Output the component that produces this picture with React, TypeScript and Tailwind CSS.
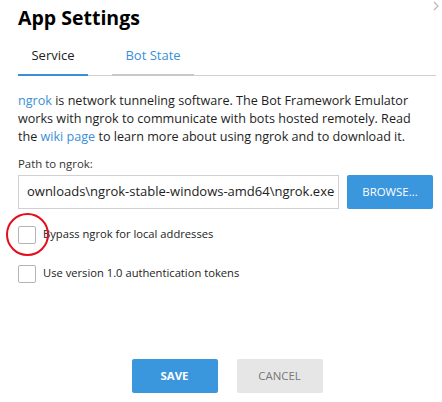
import { FC, useState } from "react";

const font = { fontFamily: '"Open Sans", "Noto Sans", sans-serif' };

const Checkbox: FC<{ label: string; checked: boolean; onChange: () => void }> = ({ label, checked, onChange }) => (
    <label className="flex items-center gap-[7px] cursor-pointer">
        <span
            onClick={onChange}
            className={`w-[18px] h-[18px] border border-[#b4b4b4] rounded-[2px] ${checked ? "bg-[#3a96dd]" : "bg-white"}`}
        />
        <span className="text-[11.2px] text-[#222]">{label}</span>
    </label>
);

export default function App() {
    const [bypass, setBypass] = useState(false);
    const [v1, setV1] = useState(false);

    return (
        <div className="relative w-[442px] h-[402px] bg-white overflow-hidden pl-[18px] pr-[6px]" style={font}>
            <svg className="absolute right-[3px] top-[1px]" width="6" height="10" viewBox="0 0 6 10">
                <path d="M1 1 L5 5 L1 9" stroke="#b8b8b8" strokeWidth="1.2" fill="none" />
            </svg>

            <h1 className="text-[19.5px] font-bold text-black pt-[4px] leading-[28px]">App Settings</h1>

            <div className="flex gap-[24px] border-b border-[#d0d0d0] mt-[14px]">
                <button className="w-[70px] pb-[8px] text-[13px] text-[#222] border-b-2 border-[#3a8fd8] -mb-px">Service</button>
                <button className="w-[82px] pb-[8px] text-[13px] text-[#3a8fd8] border-b-2 border-[#c8c8c8] -mb-px">Bot State</button>
            </div>

            <p className="mt-[16px] text-[12.6px] leading-[18px] text-[#1e1e1e] whitespace-nowrap">
                <a className="text-[#3a8fd8]">ngrok</a> is network tunneling software. The Bot Framework Emulator
                <br />
                works with ngrok to communicate with bots hosted remotely. Read
                <br />
                the <a className="text-[#3a8fd8]">wiki page</a> to learn more about using ngrok and to download it.
            </p>

            <div className="mt-[9px] text-[11.4px] text-[#333]">Path to ngrok:</div>

            <div className="flex gap-[8px] mt-[3px]">
                <div className="w-[321px] h-[34px] border border-[#d0d0d0] flex items-center overflow-hidden px-[8px] whitespace-nowrap text-[13px] text-[#222]">
                    ownloads\ngrok-stable-windows-amd64\ngrok.exe
                </div>
                <button className="w-[86px] h-[34px] bg-[#3a96dd] text-white text-[11.4px] rounded-[2px]">BROWSE...</button>
            </div>

            <div className="relative mt-[17px]">
                <Checkbox label="Bypass ngrok for local addresses" checked={bypass} onChange={() => setBypass(!bypass)} />
                <span className="absolute left-[-12px] top-[-13px] w-[43px] h-[43px] rounded-full border-2 border-[#e3101c] pointer-events-none" />
            </div>

            <div className="mt-[21px]">
                <Checkbox label="Use version 1.0 authentication tokens" checked={v1} onChange={() => setV1(!v1)} />
            </div>

            <div className="flex justify-center gap-[19px] mt-[76px]">
                <button className="w-[86px] h-[34px] bg-[#3a96dd] text-white text-[11.4px] font-bold rounded-[2px]">SAVE</button>
                <button className="w-[86px] h-[34px] bg-[#e6e6e6] text-[#777] text-[11.4px] rounded-[2px]">CANCEL</button>
            </div>
        </div>
    );
}
